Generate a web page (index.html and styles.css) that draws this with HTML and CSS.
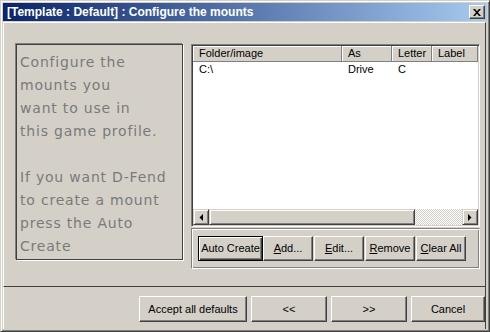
FILE: index.html
```html
<!DOCTYPE html>
<html>
<head>
<meta charset="utf-8">
<link rel="stylesheet" href="styles.css">
</head>
<body>
<div class="window">
  <div class="titlebar">
    <span class="title">[Template : Default] : Configure the mounts</span>
    <div class="close"><svg width="8" height="7" viewBox="0 0 8 7"><path d="M0 0h2l2 2.2L6 0h2L5 3.5 8 7H6L4 4.8 2 7H0l3-3.5z" fill="#000"/></svg></div>
  </div>
  <div class="main">
    <div class="desc">Configure the<br>mounts you<br>want to use in<br>this game profile.<br><br>If you want D-Fend<br>to create a mount<br>press the Auto<br>Create</div>
    <div class="right">
      <div class="list">
        <div class="lv-header">
          <div class="hcol c1">Folder/image</div>
          <div class="hcol c2">As</div>
          <div class="hcol c3">Letter</div>
          <div class="hcol c4">Label</div>
        </div>
        <div class="lv-body">
          <div class="lv-row">
            <span class="cell c1">C:\</span>
            <span class="cell c2">Drive</span>
            <span class="cell c3">C</span>
            <span class="cell c4"></span>
          </div>
        </div>
        <div class="hscroll">
          <div class="sbtn"><svg width="4" height="7" viewBox="0 0 4 7"><path d="M4 0v7L0.5 3.5z" fill="#000"/></svg></div>
          <div class="thumb"></div>
          <div class="track"></div>
          <div class="sbtn"><svg width="4" height="7" viewBox="0 0 4 7"><path d="M0 0v7l3.5-3.5z" fill="#000"/></svg></div>
        </div>
      </div>
      <div class="btngroup">
        <div class="btn default w65">Auto Create</div>
        <div class="btn w50"><u>A</u>dd...</div>
        <div class="btn w50 sp"><u>E</u>dit...</div>
        <div class="btn w50 sp"><u>R</u>emove</div>
        <div class="btn w50 sp"><u>C</u>lear All</div>
      </div>
    </div>
  </div>
  <div class="footer">
    <div class="btn accept">Accept all defaults</div>
    <div class="btn nav">&lt;&lt;</div>
    <div class="btn nav">&gt;&gt;</div>
    <div class="btn cancel">Cancel</div>
  </div>
</div>
</body>
</html>
```
FILE: styles.css
```css
* { box-sizing: border-box; }
html, body { margin: 0; padding: 0; }
body {
  width: 490px;
  height: 332px;
  background: #d4d0c8;
  font-family: "Liberation Sans", Arial, sans-serif;
  font-size: 11px;
  color: #000;
}
.window {
  width: 490px;
  height: 332px;
  background: #d4d0c8;
  border: 1px solid;
  border-color: #d4d0c8 #404040 #404040 #d4d0c8;
  box-shadow: inset 1px 1px 0 #fff, inset -1px -1px 0 #808080;
  padding: 2px;
  display: flex;
  flex-direction: column;
}
.titlebar {
  height: 18px;
  flex: none;
  background: linear-gradient(to right, #0a246a, #a6caf0);
  display: flex;
  align-items: center;
  justify-content: space-between;
  padding-left: 4px;
}
.title {
  color: #fff;
  font-family: "Liberation Sans", Arial, sans-serif;
  font-weight: bold;
  font-size: 12px;
  white-space: nowrap;
}
.close {
  width: 16px;
  height: 14px;
  margin-right: 2px;
  background: #d4d0c8;
  border: 1px solid;
  border-color: #fff #404040 #404040 #fff;
  box-shadow: inset -1px -1px 0 #808080;
  display: flex;
  align-items: center;
  justify-content: center;
  padding-right: 1px;
}
.close svg { display: block; }
.main {
  margin-top: 1px;
  width: 483px;
  height: 265px;
  flex: none;
  border: 1px solid;
  border-color: #fff #404040 #404040 #fff;
  display: flex;
  align-items: flex-start;
  padding: 21px 0 0 12px;
}
.desc {
  width: 167px;
  height: 216px;
  border: 1px solid #404040;
  box-shadow: -1px -1px 0 #808080, 1px 1px 0 #fff;
  padding: 6px 0 0 3px;
  font-family: "DejaVu Sans", sans-serif;
  font-size: 14px;
  letter-spacing: 0.8px;
  line-height: 23px;
  color: #7a7a7a;
  white-space: nowrap;
  flex: none;
}
.right {
  margin-left: 8px;
  width: 289px;
  display: flex;
  flex-direction: column;
  flex: none;
}
.list {
  height: 183px;
  border: 1px solid;
  border-color: #808080 #fff #fff #808080;
  box-shadow: inset 1px 1px 0 #404040, inset -1px -1px 0 #d4d0c8;
  padding: 1px;
  background: #fff;
  display: flex;
  flex-direction: column;
}
.lv-header {
  display: flex;
  height: 16px;
  flex: none;
}
.hcol {
  height: 16px;
  background: #d4d0c8;
  border-right: 1px solid #808080;
  border-bottom: 1px solid #808080;
  box-shadow: inset 1px 1px 0 #fff;
  padding-left: 6px;
  line-height: 15px;
  white-space: nowrap;
  overflow: hidden;
}
.c1 { width: 149px; }
.c2 { width: 50px; }
.c3 { width: 40px; }
.c4 { width: 46px; }
.lv-body {
  flex: 1;
  background: #fff;
}
.lv-row {
  display: flex;
  height: 14px;
  margin-top: 1px;
  line-height: 13px;
}
.cell {
  padding-left: 6px;
  white-space: nowrap;
}
.hscroll {
  height: 16px;
  flex: none;
  display: flex;
}
.sbtn {
  width: 16px;
  height: 16px;
  flex: none;
  background: #d4d0c8;
  border: 1px solid;
  border-color: #d4d0c8 #404040 #404040 #d4d0c8;
  box-shadow: inset 1px 1px 0 #fff, inset -1px -1px 0 #808080;
  display: flex;
  align-items: center;
  justify-content: center;
}
.sbtn svg { display: block; }
.thumb {
  width: 206px;
  flex: none;
  background: #d4d0c8;
  border: 1px solid;
  border-color: #d4d0c8 #404040 #404040 #d4d0c8;
  box-shadow: inset 1px 1px 0 #fff, inset -1px -1px 0 #808080;
}
.track {
  flex: 1;
  background-color: #d4d0c8;
  background-image: conic-gradient(#fff 25%, #d4d0c8 0 50%, #fff 0 75%, #d4d0c8 0);
  background-size: 2px 2px;
}
.btngroup {
  margin-top: 1px;
  height: 41px;
  border: 1px solid;
  border-color: #808080 #fff #fff #808080;
  box-shadow: inset 1px 1px 0 #fff, inset -1px -1px 0 #808080;
  display: flex;
  align-items: flex-start;
  padding: 7px 0 0 6px;
}
.btn {
  height: 25px;
  background: #d4d0c8;
  border: 1px solid;
  border-color: #fff #404040 #404040 #fff;
  box-shadow: inset -1px -1px 0 #808080;
  display: flex;
  align-items: center;
  justify-content: center;
  white-space: nowrap;
  flex: none;
  padding-bottom: 1px;
}
.btn u { text-decoration: underline; text-underline-offset: 1px; }
.btn.default {
  border: 1px solid #000;
  box-shadow: inset 1px 1px 0 #fff, inset -1px -1px 0 #404040, inset -2px -2px 0 #808080;
}
.w65 { width: 65px; }
.w50 { width: 50px; }
.sp { margin-left: 1px; }
.footer {
  width: 483px;
  height: 42px;
  flex: none;
  border-left: 1px solid #fff;
  border-right: 1px solid #404040;
  display: flex;
  justify-content: flex-end;
  align-items: flex-start;
  padding-top: 9px;
  gap: 4px;
}
.footer .btn { height: 26px; }
.accept { width: 108px; }
.nav { width: 76px; }
.cancel { width: 74px; }
```
